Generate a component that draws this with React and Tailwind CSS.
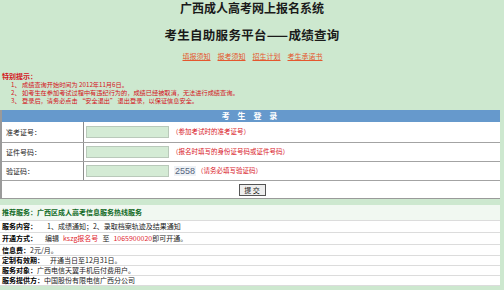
const hints = [
  "1、 成绩查询开始时间为 2012年11月6日。",
  "2、 如考生在参加考试过程中有违纪行为的，成绩已经被取消，无法进行成绩查询。",
  "3、 登录后，请务必点击 “安全退出” 退出登录，以保证信息安全。",
]

const links = ["填报须知", "报考须知", "招生计划", "考生承诺书"]

function FormRow({ label, hint, h, captcha }) {
  return (
    <div className={`flex border-b border-[#a3a3a3] ${h}`}>
      <div className="flex w-[82px] shrink-0 items-center border-r border-[#8c8c8c] pl-[4px] text-[7px] text-[#222]">
        {label}
      </div>
      <div className="flex items-center pl-[2px]">
        <input className="h-[12px] w-[83px] border border-[#b9c9ba] bg-[#d4ebd5] outline-none" />
        {captcha && (
          <span className="ml-[5px] bg-[#eef2f6] px-[1px] font-['Liberation_Sans',sans-serif] text-[9px] leading-[10px] text-[#56657e]">
            2558
          </span>
        )}
        <span className={`${captcha ? "ml-[1px]" : "ml-[3px]"} text-[6.5px] text-[#d8141e]`}>{hint}</span>
      </div>
    </div>
  )
}

function InfoRow({ label, children, h }) {
  return (
    <div className={`flex items-center border-b border-[#dcdcdc] bg-white pl-[2px] text-[7px] leading-[9px] text-[#222] ${h}`}>
      <span className="font-bold text-black">{label}</span>
      {children}
    </div>
  )
}

export default function App() {
  return (
    <div className="h-[290px] w-[504px] overflow-hidden bg-[#cde8cf] font-['Noto_Sans_CJK_SC',sans-serif]">
      {/* titles */}
      <div className="h-[16px] text-center text-[12px] font-bold leading-[16px] text-[#1a1a1a]">
        广西成人高考网上报名系统
      </div>
      <div className="mt-[11px] h-[16px] text-center text-[12.5px] font-bold leading-[16px] tracking-[0.3px] text-[#1a1a1a]">
        考生自助服务平台——成绩查询
      </div>
      <div className="mt-[8px] flex h-[10px] justify-center gap-[7px] pl-[1px] text-[7px] leading-[10px]">
        {links.map((l) => (
          <a key={l} href="#" className="text-[#e4572e] underline">
            {l}
          </a>
        ))}
      </div>

      {/* notice */}
      <div className="mt-[11px] h-[8px] pl-[2px] text-[7px] font-bold leading-[8px] text-[#d4101a]">特别提示：</div>
      <div className="mt-[1px] pl-[11px]">
        {hints.map((t) => (
          <div key={t} className="h-[8px] overflow-hidden text-[6.2px] leading-[8px] text-[#d4101a]">
            {t}
          </div>
        ))}
      </div>

      {/* login form */}
      <div className="mt-[5px] w-[500px] border-l-2 border-[#9a9a9a] bg-white">
        <div className="h-[12px] bg-[#6699cc] text-center text-[8px] font-bold leading-[12px] tracking-[3px] text-white">
          考 生 登 录
        </div>
        <FormRow label="准考证号：" hint="（参加考试时的准考证号）" h="h-[21px]" />
        <FormRow label="证件号码：" hint="（报名时填写的身份证号码或证件号码）" h="h-[19px]" />
        <FormRow label="验证码：" hint="（请务必填写验证码）" h="h-[19px]" captcha />
        <div className="flex h-[18px] items-center justify-center border-b border-[#9a9a9a]">
          <button className="ml-[2px] h-[12px] w-[27px] border border-[#555] bg-[#eeeeee] text-[7px] leading-[10px] text-[#111]">
            提 交
          </button>
        </div>
      </div>

      {/* service info */}
      <div className="mt-[6px] w-[500px]">
        <div className="flex h-[16px] items-center border-b border-[#dcdcdc] bg-[#f1f8f1] pl-[2px] text-[7px] font-bold text-[#0f6a1f]">
          推荐服务：广西区成人高考信息服务热线服务
        </div>
        <InfoRow label="服务内容：" h="h-[12px]">
          <span className="ml-[10px]">1、成绩通知；2、录取档案轨迹及结果通知</span>
        </InfoRow>
        <InfoRow label="开通方式：" h="h-[12px]">
          <span className="ml-[8px]">编辑</span>
          <span className="ml-[4px] text-[#e0262e]">kszg报名号</span>
          <span className="ml-[4px]">至</span>
          <span className="ml-[4px] text-[#e0262e]">1065900020</span>
          <span>即可开通。</span>
        </InfoRow>
        <InfoRow label="信息费：" h="h-[11px]">
          <span>2元/月。</span>
        </InfoRow>
        <InfoRow label="定制有效期：" h="h-[10px]">
          <span className="ml-[6px]">开通当日至12月31日。</span>
        </InfoRow>
        <InfoRow label="服务对象：" h="h-[10px]">
          <span>广西电信天翼手机后付费用户。</span>
        </InfoRow>
        <InfoRow label="服务提供方：" h="h-[10px]">
          <span>中国股份有限电信广西分公司</span>
        </InfoRow>
      </div>
    </div>
  )
}
